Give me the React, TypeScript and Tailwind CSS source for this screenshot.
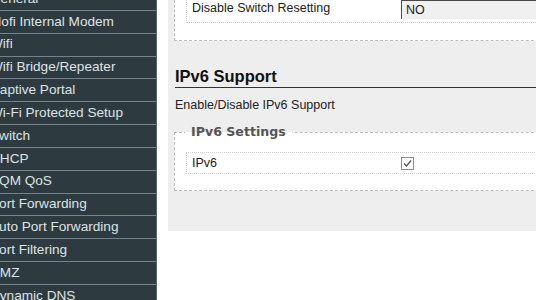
const menu = [
  "General",
  "Mofi Internal Modem",
  "Wifi",
  "Wifi Bridge/Repeater",
  "Captive Portal",
  "Wi-Fi Protected Setup",
  "Switch",
  "DHCP",
  "SQM QoS",
  "Port Forwarding",
  "Auto Port Forwarding",
  "Port Filtering",
  "DMZ",
  "Dynamic DNS",
];

const font = "font-['Liberation_Sans',Arial,sans-serif]";

export default function App() {
  return (
    <div className={`flex h-[300px] w-[536px] overflow-hidden bg-white ${font}`}>
      {/* side menu, scrolled a little to the right */}
      <aside className="w-[157px] shrink-0 overflow-hidden border-r border-[#55656a] bg-[#2d3b40]">
        <div className="-mt-[12px]">
          {menu.map((item) => (
            <div
              key={item}
              className="flex h-[22.85px] items-center border-b border-[#74838a] text-[13.6px] text-[#dde3e5]"
            >
              <span className="-ml-[10px] whitespace-nowrap">{item}</span>
            </div>
          ))}
        </div>
      </aside>

      <div className="ml-[11px] min-w-0 flex-1">
        <main className="h-[231px] overflow-hidden bg-[#eeeeee] pl-[6px] text-[12.5px] text-[#222]">
          {/* end of the switch settings box */}
          <div className="h-[41px] w-[400px] border-b border-l border-dashed border-[#bdbdbd] bg-white pl-[11px]">
            <div className="flex h-[23px] border-b border-l border-dotted border-[#cfcfcf]">
              <div className="w-[214px] shrink-0 pl-[5px] leading-[16px]">Disable Switch Resetting</div>
              <div className="flex h-[19px] w-[300px] shrink-0 items-center border-l border-t border-[#4a4a4a] bg-[#f0f0f0] pl-[4px]">
                NO
              </div>
            </div>
          </div>

          <h2 className="ml-px mt-[24px] h-[23px] w-[400px] border-b border-[#333] text-[16.5px] font-bold leading-[22px] text-[#111]">
            IPv6 Support
          </h2>

          <p className="ml-px mt-[9px] leading-[16px]">Enable/Disable IPv6 Support</p>

          <fieldset className="mt-[11px] w-[400px] border border-dashed border-[#bdbdbd] bg-white pb-[16px]">
            <legend className="ml-[10px] px-[6px] font-['DejaVu_Sans',Verdana,sans-serif] text-[12.6px] font-bold leading-[16px] text-[#555]">
              IPv6 Settings
            </legend>
            <div className="ml-[11px] mt-[12px] flex h-[22px] items-center border-y border-l border-dotted border-[#cfcfcf]">
              <div className="w-[214px] shrink-0 pl-[5px]">IPv6</div>
              <span className="flex h-[13px] w-[13px] items-center justify-center border border-[#8f8f8f] bg-white">
                <svg width="11" height="11" viewBox="0 0 11 11">
                  <path d="M2 5.5 L4.5 8 L9 2.5" fill="none" stroke="#555" strokeWidth="1.2" />
                </svg>
              </span>
            </div>
          </fieldset>
        </main>
      </div>
    </div>
  );
}
